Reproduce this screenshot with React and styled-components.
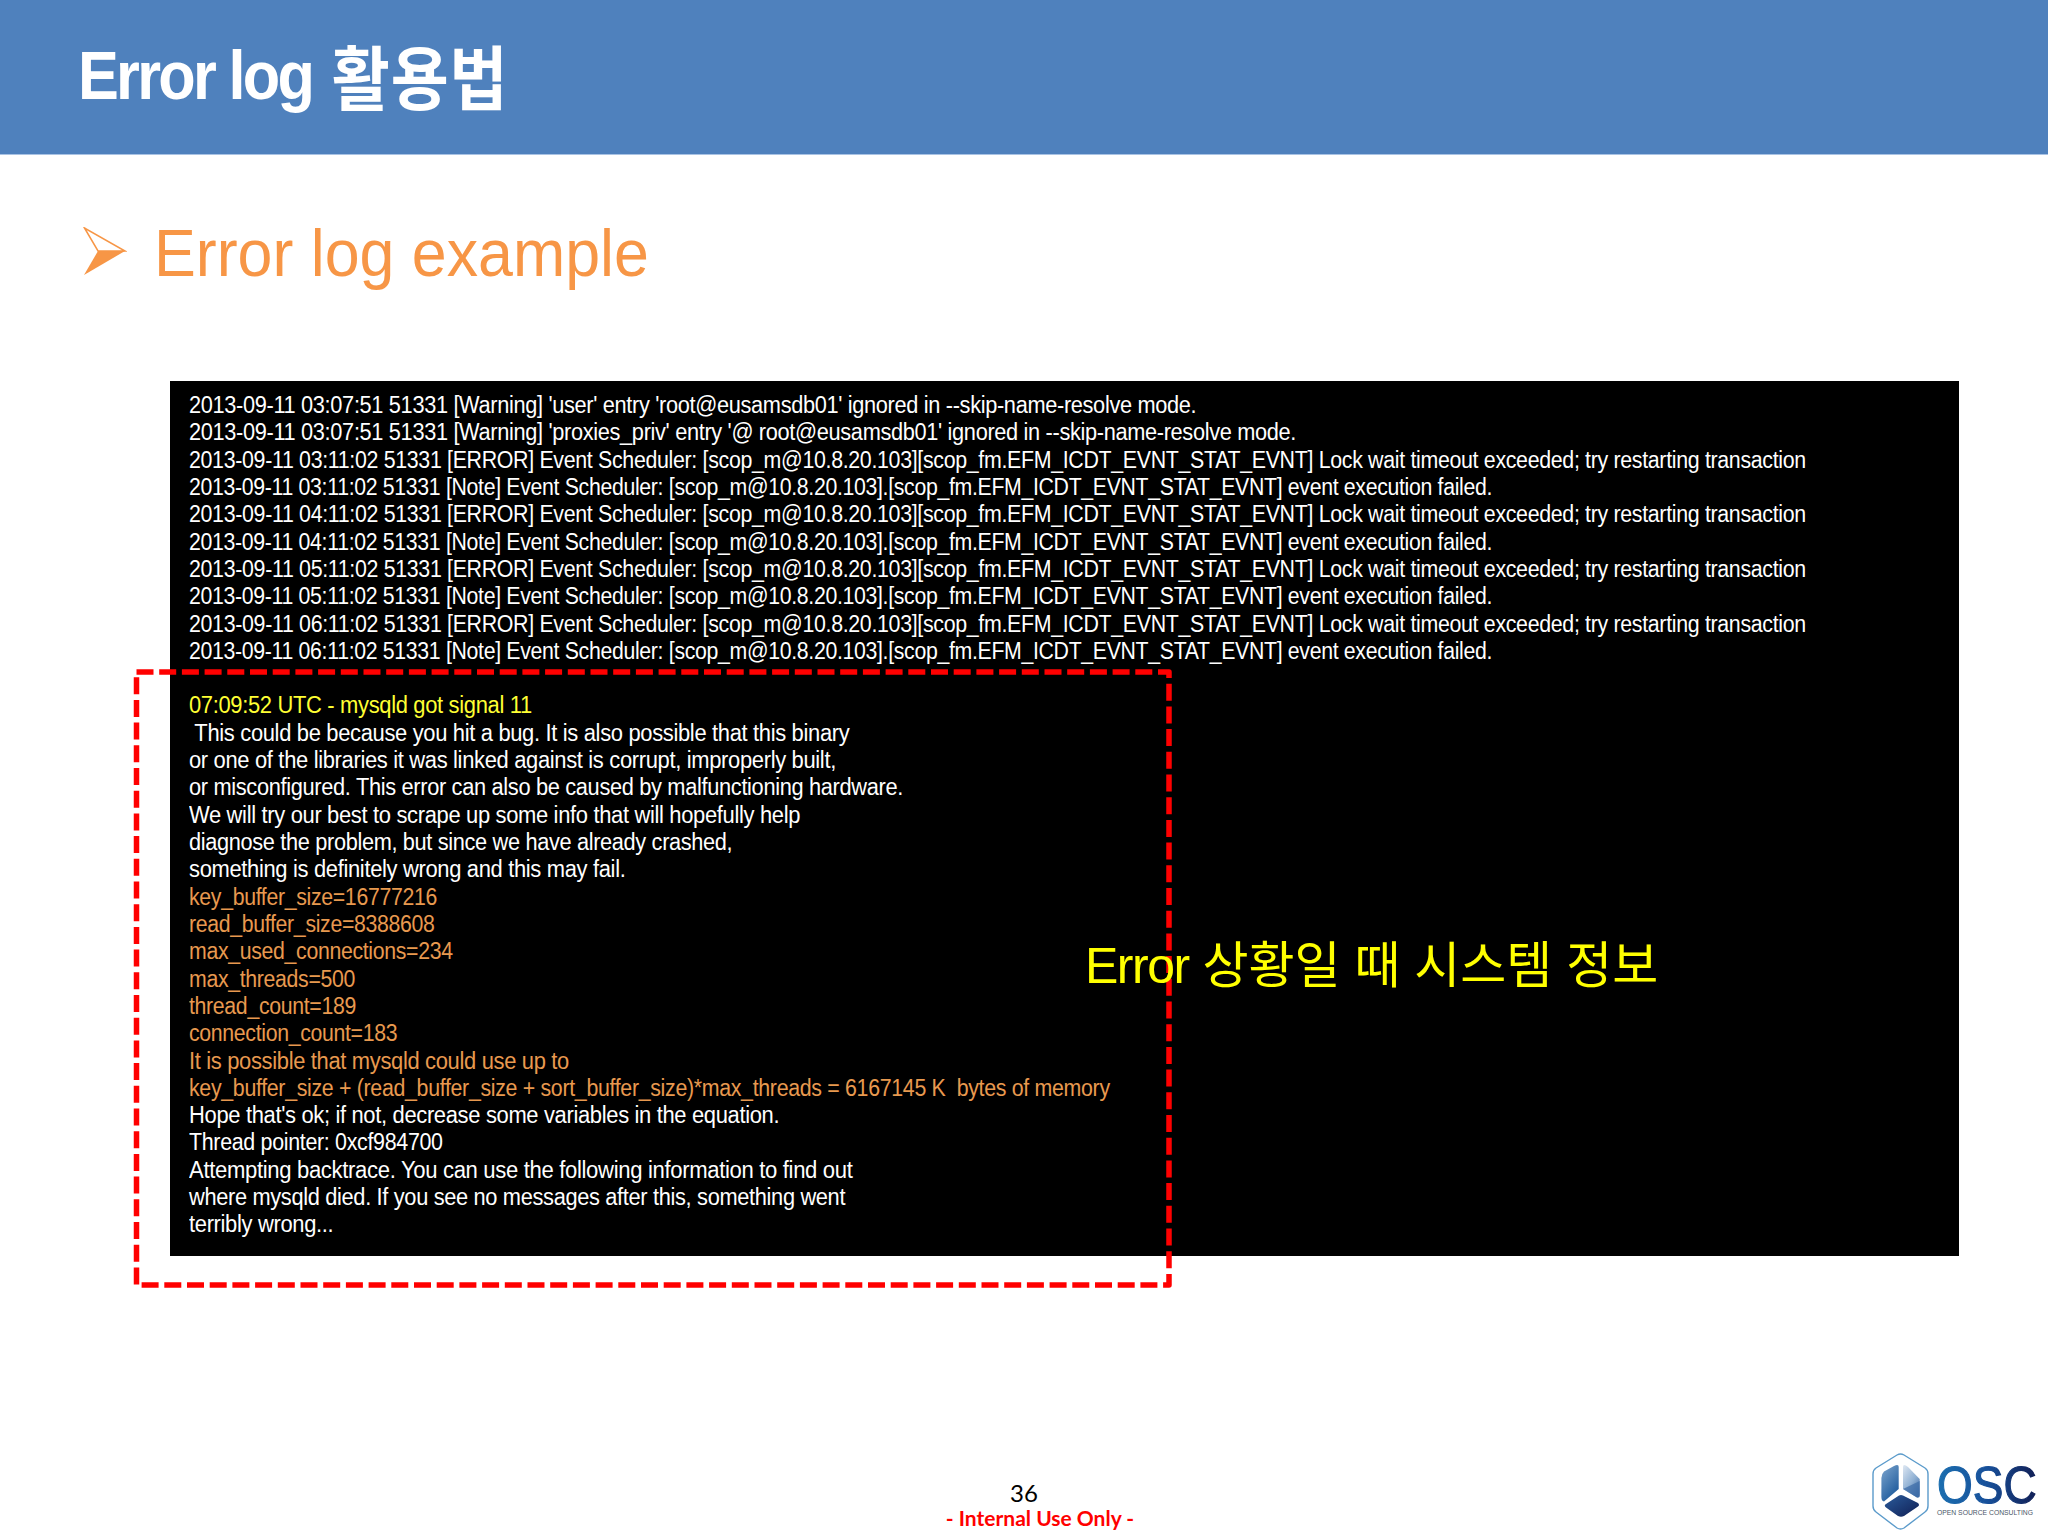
import React from 'react';
import styled, { createGlobalStyle } from 'styled-components';

const GlobalStyle = createGlobalStyle`
  html, body {
    margin: 0;
    padding: 0;
    background: #fff;
  }
`;

const Page = styled.div`
  width: 2048px;
  height: 1536px;
  display: flex;
  flex-direction: column;
  overflow: hidden;
  font-family: "Liberation Sans", "Noto Sans CJK KR", sans-serif;
`;

const Header = styled.header`
  height: 155px;
  flex: none;
  box-sizing: border-box;
  padding: 33px 0 0 78px;
  background: #4f81bd;
  border-bottom: 1px solid #a9c3e4;
`;

const Title = styled.h1`
  margin: 0;
  color: #fff;
  font-size: 68px;
  line-height: 84px;
  height: 84px;
  font-weight: 700;
  letter-spacing: -3px;
  transform: scaleX(0.9);
  transform-origin: left center;
  white-space: nowrap;
`;

const TitleHangul = styled.span`
  font-size: 70px;
  letter-spacing: 1px;
  margin-left: 6px;
  vertical-align: -6px;
`;

const Subhead = styled.div`
  display: flex;
  align-items: center;
  height: 80px;
  margin: 57px 0 0 83px;
  gap: 27px;
`;

const SubheadText = styled.h2`
  margin: 2px 0 0;
  color: #f79646;
  font-size: 66px;
  font-weight: 400;
  line-height: 80px;
  white-space: nowrap;
  transform: scaleX(0.95);
  transform-origin: left center;
`;

const PanelWrap = styled.div`
  position: relative;
  width: 1789px;
  margin: 89px 0 0 170px;
`;

const Panel = styled.div`
  background: #000;
  padding: 11px 0 17px 19px;
`;

const LogLine = styled.div`
  height: 27.32px;
  line-height: 27.32px;
  font-size: 23px;
  white-space: pre;
  color: ${(props) => props.$color || '#fff'};
  letter-spacing: -0.35px;
  transform: scaleX(${(props) => props.$squeeze || 0.954});
  transform-origin: left center;
`;

const Marker = styled.svg`
  position: absolute;
  left: -40px;
  top: 284px;
  overflow: visible;
`;

const Callout = styled.div`
  position: absolute;
  left: 915px;
  top: 553px;
  color: #ffff00;
  font-size: 50px;
  line-height: 64px;
  white-space: nowrap;
`;

const CalloutLatin = styled.span`
  letter-spacing: -1.5px;
`;

const Footer = styled.footer`
  flex: 1;
  display: grid;
  grid-template-columns: 1fr auto 1fr;
  align-items: end;
  padding-bottom: 6px;
`;

const FooterCenter = styled.div`
  grid-column: 2;
  display: flex;
  flex-direction: column;
  align-items: center;
  font-family: Lato, "Open Sans", sans-serif;
`;

const PageNumber = styled.div`
  color: #000;
  font-size: 24px;
  line-height: 26px;
`;

const Notice = styled.div`
  color: #ff0000;
  font-size: 21px;
  line-height: 24px;
  font-weight: 700;
  margin-left: 32px;
`;

const Logo = styled.svg`
  justify-self: end;
  margin: 0 7px -1px 0;
`;

const ERROR_ROW = 0.929;
const DATA = 0.925;
const HEAD = 0.946;

const LOG_HEAD = [
  "2013-09-11 03:07:51 51331 [Warning] 'user' entry 'root@eusamsdb01' ignored in --skip-name-resolve mode.",
  "2013-09-11 03:07:51 51331 [Warning] 'proxies_priv' entry '@ root@eusamsdb01' ignored in --skip-name-resolve mode.",
];

const errorLine = (time) =>
  `2013-09-11 ${time} 51331 [ERROR] Event Scheduler: [scop_m@10.8.20.103][scop_fm.EFM_ICDT_EVNT_STAT_EVNT] Lock wait timeout exceeded; try restarting transaction`;
const noteLine = (time) =>
  `2013-09-11 ${time} 51331 [Note] Event Scheduler: [scop_m@10.8.20.103].[scop_fm.EFM_ICDT_EVNT_STAT_EVNT] event execution failed.`;

const ORANGE = '#e8994f';
const YELLOW = '#ffff33';

const LINES = [
  ...LOG_HEAD.map((text) => ({ text, squeeze: HEAD })),
  ...['03:11:02', '04:11:02', '05:11:02', '06:11:02'].flatMap((time) => [
    { text: errorLine(time), squeeze: ERROR_ROW },
    { text: noteLine(time), squeeze: DATA },
  ]),
  { text: ' ' },
  { text: '07:09:52 UTC - mysqld got signal 11', color: YELLOW },
  { text: ' This could be because you hit a bug. It is also possible that this binary' },
  { text: 'or one of the libraries it was linked against is corrupt, improperly built,' },
  { text: 'or misconfigured. This error can also be caused by malfunctioning hardware.', squeeze: 0.948 },
  { text: 'We will try our best to scrape up some info that will hopefully help' },
  { text: 'diagnose the problem, but since we have already crashed,', squeeze: 0.945 },
  { text: 'something is definitely wrong and this may fail.' },
  { text: 'key_buffer_size=16777216', color: ORANGE, squeeze: DATA },
  { text: 'read_buffer_size=8388608', color: ORANGE, squeeze: DATA },
  { text: 'max_used_connections=234', color: ORANGE, squeeze: DATA },
  { text: 'max_threads=500', color: ORANGE, squeeze: DATA },
  { text: 'thread_count=189', color: ORANGE, squeeze: DATA },
  { text: 'connection_count=183', color: ORANGE, squeeze: DATA },
  { text: 'It is possible that mysqld could use up to', color: ORANGE },
  { text: 'key_buffer_size + (read_buffer_size + sort_buffer_size)*max_threads = 6167145 K  bytes of memory', color: ORANGE, squeeze: 0.929 },
  { text: "Hope that's ok; if not, decrease some variables in the equation." },
  { text: 'Thread pointer: 0xcf984700', squeeze: 0.932 },
  { text: 'Attempting backtrace. You can use the following information to find out', squeeze: 0.96 },
  { text: 'where mysqld died. If you see no messages after this, something went', squeeze: 0.948 },
  { text: 'terribly wrong...' },
];

const Arrow = () => (
  <svg width="44" height="50" viewBox="0 0 44 50">
    <path d="M1.5 1 L15 24 L42 24 Z" fill="#fff" stroke="#f79646" strokeWidth="1.5" strokeLinejoin="miter" />
    <path d="M15 24 L42 24 L1 48 Z" fill="#f79646" />
  </svg>
);

const OscLogo = () => (
  <Logo width="170" height="80" viewBox="0 0 170 80">
    <defs>
      <linearGradient id="cellLeft" x1="0" y1="0" x2="0.6" y2="1">
        <stop offset="0" stopColor="#7ea6ce" />
        <stop offset="1" stopColor="#1d5a9c" />
      </linearGradient>
      <linearGradient id="cellRight" x1="0" y1="0" x2="0.7" y2="1">
        <stop offset="0" stopColor="#dfe8f3" />
        <stop offset="0.6" stopColor="#8fb0d3" />
        <stop offset="1" stopColor="#3f6ea8" />
      </linearGradient>
      <linearGradient id="cellBottom" x1="0" y1="0" x2="1" y2="1">
        <stop offset="0" stopColor="#2a5b9b" />
        <stop offset="1" stopColor="#101f54" />
      </linearGradient>
      <linearGradient id="word" gradientUnits="userSpaceOnUse" x1="0" y1="0" x2="100" y2="0">
        <stop offset="0" stopColor="#1b6fb0" />
        <stop offset="0.5" stopColor="#17509a" />
        <stop offset="1" stopColor="#121f55" />
      </linearGradient>
    </defs>
    <path d="M26 4 Q29.5 2 33 4 L54 17 Q57 19 57 23 L57 55 Q57 59 54 61 L33 77 Q29.5 79 26 77 L5 61 Q2 59 2 55 L2 23 Q2 19 5 17 Z" fill="#fff" stroke="#5b9bcb" strokeWidth="1.4" />
    <path d="M27.7 16 L27.7 38 L13 50.5 Q10.4 50 10.4 46 L10.4 27 Q10.4 23 13 20.5 L23 15 Q27.7 12.5 27.7 16 Z" fill="url(#cellLeft)" />
    <path d="M32 16 L32 38 L46 46.5 Q48.7 47 48.7 44 L48.7 28 L37 16 Q32 12 32 16 Z" fill="url(#cellRight)" />
    <path d="M32 38 L48.7 30 L48.7 45 Q48.7 47 46 46.5 Z" fill="#3f6ea8" opacity="0.75" />
    <path d="M28 44.5 Q30 43.5 32 44.5 L47 52 Q49 54 47 55.5 L33 65 Q30 66.5 27 65 L15 56.5 Q12.5 54.5 15 53 Z" fill="url(#cellBottom)" />
    <g transform="translate(66 52) scale(1 1.12)">
      <text x="0" y="0" fontFamily="Liberation Sans" fontSize="46" fill="url(#word)" stroke="url(#word)" strokeWidth="1.1">OSC</text>
    </g>
    <text x="66" y="63.5" fontFamily="Liberation Sans" fontSize="6.4" textLength="96" lengthAdjust="spacingAndGlyphs" fill="#4a5668">OPEN SOURCE CONSULTING</text>
  </Logo>
);

const App = () => (
  <>
    <GlobalStyle />
    <Page>
      <Header>
        <Title>Error log <TitleHangul>활용법</TitleHangul></Title>
      </Header>
      <Subhead>
        <Arrow />
        <SubheadText>Error log example</SubheadText>
      </Subhead>
      <PanelWrap>
        <Panel>
          {LINES.map((line, i) => (
            <LogLine key={i} $color={line.color} $squeeze={line.squeeze}>{line.text}</LogLine>
          ))}
        </Panel>
        <Marker width="1050" height="630" viewBox="0 0 1050 630">
          <rect x="6.5" y="7" width="1032.5" height="613" fill="none" stroke="#ff0000" strokeWidth="5.5" strokeDasharray="17 5.7" strokeLinejoin="round" />
        </Marker>
        <Callout><CalloutLatin>Error</CalloutLatin> 상황일 때 시스템 정보</Callout>
      </PanelWrap>
      <Footer>
        <FooterCenter>
          <PageNumber>36</PageNumber>
          <Notice>- Internal Use Only -</Notice>
        </FooterCenter>
        <OscLogo />
      </Footer>
    </Page>
  </>
);

export default App;
